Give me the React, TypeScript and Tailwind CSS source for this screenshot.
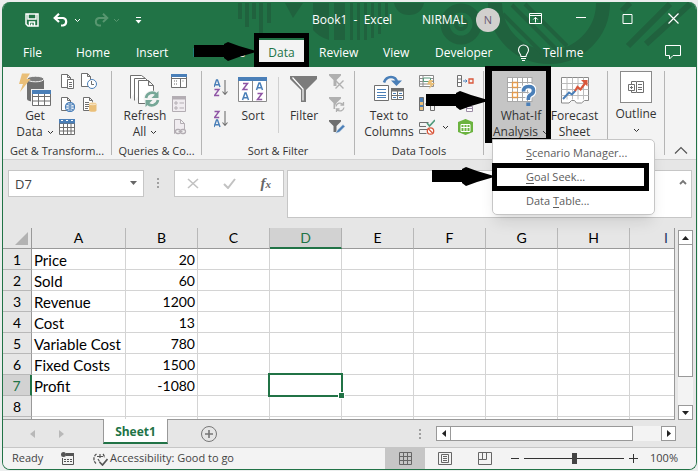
import type { ReactNode } from "react";

type SvgProps = { w: number; h: number; children: ReactNode; className?: string };

function Svg({ w, h, children, className = "" }: SvgProps) {
  return (
    <svg width={w} height={h} viewBox={`0 0 ${w} ${h}`} fill="none" aria-hidden="true" className={`block shrink-0 ${className}`}>
      {children}
    </svg>
  );
}

function Chevron({ className = "" }: { className?: string }) {
  return (
    <Svg w={7} h={5} className={className}>
      <path d="M1 1l2.500 2.500L6 1" stroke="currentColor" strokeWidth="1" />
    </Svg>
  );
}

function Arrow({ className }: { className: string }) {
  return (
    <svg width="62" height="19" viewBox="0 0 62 19" aria-hidden="true" className={`pointer-events-none absolute z-20 ${className}`}>
      <path d="M0 3H30V2L34 0L45 4L62 9V10L45 15L34 19L30 16V15H0Z" fill="#000" />
    </svg>
  );
}

/* ---------- title bar ---------- */

function HeaderPattern() {
  return (
    <svg width="466" height="65" viewBox="0 0 466 65" aria-hidden="true" className="pointer-events-none absolute top-0 right-0">
      <g fill="#20623e">
        <path d="M8 1h4v16H8zM15 1h4v24h-4zM22 1h4v16h-4zM29 1h4v30h-4zM37 1h4v20h-4z" />
        <path d="M55 1h18l-10 15z" />
        <path d="M83 1h16v37q-10-3-16-10zM104 1h11v37h-11z" />
        <path d="M120 1h3v37h-3zM127 1h3v37h-3zM134 1h3v37h-3zM141 1h3v35h-3zM148 1h3v31h-3zM155 1h3v20h-3z" />
        <path d="M164 1h30q-3 12-15 12T164 1z" />
      </g>
      <g stroke="#20623e" fill="none">
        <circle cx="231" cy="22" r="16" strokeWidth="9" />
        <circle cx="231" cy="22" r="5" strokeWidth="4" />
        <path d="M265 1a54 54 0 0 0 108 0" strokeWidth="14" />
        <path d="M273 12l40 40M282 3l45 45M295 2l42 42" strokeWidth="4" />
        <path d="M398 44l42-42M416 42l44-40M392 9l8-8" strokeWidth="6" />
      </g>
    </svg>
  );
}

function TitleBar() {
  const ctl = "flex h-9 w-[46px] items-center justify-center pb-1";
  return (
    <div className="relative flex h-9 items-center">
      <div className="flex flex-1 items-center pl-[22px]">
        <button aria-label="Save">
          <Svg w={14} h={14}>
            <path d="M1 1h12v12H3L1 11zM3 1v5h8V1M4.500 13V9h5v4" stroke="#fff" strokeWidth="1.500" />
            <path d="M6 10.500h1.500V13H6z" fill="#fff" />
          </Svg>
        </button>
        <button aria-label="Undo" className="ml-[14px]">
          <Svg w={16} h={14}>
            <path d="M1.500 5H10a3.800 3.800 0 0 1 0 7.500H8M6 .8L1.700 5l4.300 4" stroke="#fff" strokeWidth="2.200" />
          </Svg>
        </button>
        <button aria-label="Undo list" className="ml-[5px] text-white"><Chevron /></button>
        <button aria-label="Redo" className="ml-[12px]">
          <Svg w={16} h={14}>
            <path d="M14.500 5H6a3.800 3.800 0 0 0 0 7.500h2M10 .8L14.300 5 10 9" stroke="#57966f" strokeWidth="2" />
          </Svg>
        </button>
        <button aria-label="Redo list" className="ml-[4px] text-[#57966f]"><Chevron /></button>
        <button aria-label="Customize toolbar" className="ml-[15px]">
          <Svg w={7} h={7}>
            <path d="M1 .5h5" stroke="#fff" />
            <path d="M.5 3h6L3.500 6.500z" fill="#fff" />
          </Svg>
        </button>
      </div>
      <h1 className="w-[76px] text-center text-[12px] whitespace-pre text-white">Book1  -  Excel</h1>
      <span className="ml-[34px] w-[46px] text-[12px] text-white">NIRMAL</span>
      <button className="mr-3 ml-2 flex size-6 items-center justify-center rounded-full bg-[#d2d0ce] text-[11px] text-[#6b5b75]">N</button>
      <button aria-label="Ribbon display options" className={ctl}>
        <Svg w={13} h={11}>
          <path d="M.5.5h12v10H.500zM.5 2.500h12M6.500 9.500v-5M4.300 6.500l2.200-2.200 2.200 2.200" stroke="#fff" />
        </Svg>
      </button>
      <button aria-label="Minimize" className={ctl}>
        <Svg w={11} h={11}><path d="M0 4.500h10" stroke="#fff" /></Svg>
      </button>
      <button aria-label="Maximize" className={ctl}>
        <Svg w={11} h={11}><path d="M1 1.500h9v9H1z" stroke="#fff" /></Svg>
      </button>
      <button aria-label="Close" className={ctl}>
        <Svg w={11} h={11}><path d="M.5.5l10 10M10.500.5l-10 10" stroke="#fff" strokeWidth="1.200" /></Svg>
      </button>
    </div>
  );
}

function TabBar() {
  return (
    <nav className="relative flex h-[29px] items-center text-[12px] text-white">
      <button className="ml-5 w-[53px] text-left">File</button>
      <button className="w-[60px] text-left">Home</button>
      <button className="w-[57px] text-left">Insert</button>
      <button className="w-[66px] text-left">Formulas</button>
      <div className="relative flex h-[29px] w-[45px] items-center">
        <button className="h-[25px] w-full bg-[#f3f3f3] text-[#217346]">Data</button>
        <span className="pointer-events-none absolute -inset-x-[5px] -top-[5px] bottom-0 z-10 border-5 border-black" />
        <Arrow className="top-1 right-[48px]" />
      </div>
      <button className="ml-[15px] w-[64px] text-left">Review</button>
      <button className="w-[52px] text-left">View</button>
      <button className="w-[82px] text-left">Developer</button>
      <Svg w={13} h={17}>
        <path d="M4 12.500C4 10 1.500 9 1.500 6a5 5 0 0 1 10 0C11.500 9 9 10 9 12.500zM4 14.500h5M5 16.500h3" stroke="#fff" strokeWidth="1.100" />
      </Svg>
      <button className="ml-[13px] text-left">Tell me</button>
      <button aria-label="Comments" className="mr-[14px] ml-auto">
        <Svg w={17} h={15}><path d="M.5.500h15v10H8l-3.500 3.500v-3.500h-4z" stroke="#fff" /></Svg>
      </button>
    </nav>
  );
}

/* ---------- ribbon icons ---------- */

const G = "#6f6f6f";
const BLUE = "#4a7fb8";

function GetDataIcon() {
  return (
    <Svg w={34} h={36}>
      <path d="M9 7v20a8.500 3 0 0 0 17 0V7z" fill="#6f6f6f" />
      <ellipse cx="17.500" cy="7" rx="8.500" ry="2.800" fill="#7d7d7d" stroke="#f3f3f3" />
      <path d="M4 1.500h8L8.500 7h4L2 20l3-8H1z" fill="#eabf78" />
      <path d="M13 17h21v18H13z" fill="#f3f3f3" />
      <path d="M14.500 19.500h18v14h-18zM14.500 24.500h18M14.500 29h18M20.500 20v13M26.500 20v13" stroke={G} fill="#fff" />
      <path d="M14 18h19v4H14z" fill={BLUE} />
    </Svg>
  );
}

function PageBase({ color = G, fill = "#fff" }: { color?: string; fill?: string }) {
  return <path d="M2.500 1.500h6l3 3v10h-9zM8.500 1.500v3h3" stroke={color} fill={fill} />;
}

function TextFileIcon() {
  return (
    <Svg w={16} h={16}>
      <PageBase />
      <path d="M8.500 6.500h6v9h-6z" fill="#fff" stroke={G} />
      <path d="M10 9.500h3M10 11.500h3M10 13.500h3" stroke={G} />
    </Svg>
  );
}
function RecentIcon() {
  return (
    <Svg w={16} h={16}>
      <path d="M.5.500h6l3 3v10h-9zM6.500.5v3h3" stroke={G} fill="#fff" />
      <circle cx="11" cy="11" r="4.500" fill="#fff" stroke={BLUE} />
      <path d="M10.500 8v3.500H13" stroke={G} />
    </Svg>
  );
}
function WebFileIcon() {
  return (
    <Svg w={16} h={16}>
      <PageBase />
      <circle cx="11" cy="11" r="4.500" fill="#fff" stroke={BLUE} strokeWidth="1.300" />
      <path d="M6.500 11h9M11 6.500v9M8 8.500q3 1.500 6 0M8 13.500q3-1.500 6 0" stroke={BLUE} />
    </Svg>
  );
}
function DbFileIcon() {
  return (
    <Svg w={16} h={16}>
      <PageBase />
      <path d="M4 6.500h4M4 8.500h4M4 10.500h4M4 12.500h3" stroke={G} />
      <path d="M8 7.500v7a3.700 1.300 0 0 0 7.500 0v-7z" fill="#eabf78" />
      <ellipse cx="11.700" cy="7.500" rx="3.700" ry="1.300" fill="#f0cf97" stroke="#fff" strokeWidth=".5" />
    </Svg>
  );
}
function TableIcon() {
  return (
    <Svg w={16} h={16}>
      <path d="M.5.500h15v15H.500zM.5 4.500h15M.5 8.500h15M.5 12h15M4.500 4v11M8.500 4v11M12 4v11" stroke={G} fill="#fff" />
      <path d="M0 0h16v4.500H0z" fill={BLUE} />
      <path d="M2 1.500h2M7 1.500h2M12 1.500h2" stroke="#fff" />
    </Svg>
  );
}
function RefreshIcon() {
  return (
    <Svg w={32} h={36}>
      <path d="M5.500 28.500V6.500h11l4 4M1.500 26.500v-23h11l4 3" stroke={G} fill="#fff" />
      <path d="M9.500 31.500v-23h10l5 5v18zM19.500 8.500v5h5" stroke={G} fill="#fff" />
      <circle cx="23" cy="27" r="8.500" fill="#f3f3f3" />
      <path d="M17 26a6.200 6.200 0 0 1 10.500-3.500M29 28a6.200 6.200 0 0 1-10.500 3.500" stroke="#76a797" strokeWidth="2.600" />
      <path d="M29.500 19v7h-7zM16.500 35v-7h7z" fill="#76a797" />
    </Svg>
  );
}
function QueriesIcon() {
  return (
    <Svg w={16} h={16}>
      <path d="M.5 1.500h15v13H.500zM.5 5.500h15M9.500 5.500v9" stroke={G} fill="#fff" />
      <path d="M0 1h16v3H0z" fill={BLUE} />
      <path d="M3 8h3M3 11h3M11.500 8h2" stroke={G} strokeDasharray="1 1" />
    </Svg>
  );
}
function PropertiesIcon() {
  return (
    <Svg w={16} h={16}>
      <path d="M1.500.5h13v15h-13z" stroke="#b3adb3" fill="#f0ecf0" />
      <path d="M1 0h14v3.500H1z" fill="#b3adb3" />
      <path d="M4 6h2v2H4zM4 11h2v2H4z" stroke="#b3adb3" />
      <path d="M8.500 7H13M8.500 12H13" stroke="#b3adb3" />
    </Svg>
  );
}
function LinksIcon() {
  return (
    <Svg w={16} h={16}>
      <path d="M3.500.500h6l4 4v10h-10zM9.500.5v4h4" stroke="#b3adb3" fill="#f0ecf0" />
      <path d="M4 10h10v5H4z" fill="#f3f3f3" />
      <rect x="4.500" y="10.500" width="5" height="4" rx="2" stroke="#b3adb3" strokeWidth="1.300" />
      <rect x="9.500" y="10.500" width="5" height="4" rx="2" stroke="#b3adb3" strokeWidth="1.300" />
      <path d="M7.500 12.500h4" stroke="#b3adb3" />
    </Svg>
  );
}

const LETTER_A = "M0 7L2.500 0H3.500L6 7M1 4.800H5";
const LETTER_Z = "M.5.500H5L.5 6.500H5.200";

function SortSmallIcon({ up }: { up: boolean }) {
  return (
    <Svg w={14} h={18}>
      <path d={LETTER_A} transform={up ? "translate(0 1)" : "translate(0 10)"} stroke={BLUE} strokeWidth="1.400" />
      <path d={LETTER_Z} transform={up ? "translate(0 10)" : "translate(0 1)"} stroke="#8f55a5" strokeWidth="1.400" />
      <path d="M11 1v14.500M8.500 12.500l2.500 3 2.500-3" stroke={G} strokeWidth="1.100" />
    </Svg>
  );
}
function SortIcon() {
  return (
    <Svg w={30} h={36}>
      <path d="M.5 5.500h28v24H.500zM14.500 8v21" stroke="#8a8a8a" fill="#fff" />
      <path d="M0 5h29v4H0z" fill={BLUE} />
      <path d={LETTER_Z} transform="translate(4.500 11)" stroke="#8f55a5" strokeWidth="1.500" />
      <path d={LETTER_A} transform="translate(4.500 21)" stroke={BLUE} strokeWidth="1.500" />
      <path d={LETTER_A} transform="translate(18.500 11)" stroke={BLUE} strokeWidth="1.500" />
      <path d={LETTER_Z} transform="translate(19 21)" stroke="#8f55a5" strokeWidth="1.500" />
    </Svg>
  );
}
function FilterIcon() {
  return (
    <Svg w={28} h={36}>
      <path d="M0 4h27v3L16 18v12h-5V18L0 7z" fill="#7b7b7b" />
      <path d="M2.500 5.500L13 17v11.500" stroke="#fff" strokeWidth="1.200" />
    </Svg>
  );
}
function SmallFilter({ kind }: { kind: "clear" | "reapply" | "advanced" }) {
  const c = kind === "advanced" ? "#6f6f6f" : "#b0b0b0";
  return (
    <Svg w={16} h={16}>
      <path d="M0 1h12v1.500L7.500 7v6h-3V7L0 2.500z" fill={c} />
      {kind === "clear" && <path d="M6.500 7.500l8 8M14.500 7.500l-8 8" stroke="#b0b0b0" strokeWidth="1.400" />}
      {kind === "reapply" && (
        <>
          <circle cx="11" cy="11" r="5" fill="#f3f3f3" />
          <path d="M7 10.500a4 4 0 0 1 7-2M15 11.500a4 4 0 0 1-7 2M14.500 6v3h-3M7.500 16v-3h3" stroke="#b0b0b0" strokeWidth="1.300" />
        </>
      )}
      {kind === "advanced" && <path d="M6.500 14.500l2-3.500 5.500-5.500 2 2L10.500 13z" fill={BLUE} stroke="#f3f3f3" strokeWidth=".5" />}
    </Svg>
  );
}
function TextToColumnsIcon() {
  return (
    <Svg w={30} h={36}>
      <path d="M10 10.500Q12 5 17 5t6 5" stroke={BLUE} strokeWidth="2.600" />
      <path d="M17 8.500h11l-5.500 5.500z" fill={BLUE} />
      <path d="M.5 13.500h14v15H.500z" stroke={G} fill="#fff" />
      <path d="M3 17.500h9M3 20.500h9M3 23.500h9M3 25.500h9" stroke={BLUE} />
      <path d="M17.500 16.500h12v11h-12zM23.500 17v10M17.500 23.500h12" stroke={G} fill="#fff" />
      <path d="M17 16h13v3.500H17z" fill={G} />
      <path d="M19 21.500h3M25 21.500h3M19 25.500h3M25 25.500h3" stroke={BLUE} />
    </Svg>
  );
}
function FlashFillIcon() {
  return (
    <Svg w={16} h={16}>
      <path d="M.5 2.500h14v11H.500zM.5 5.500h14M.5 8.500h14M.5 11h14M4 2.500v11" stroke="#8a8a8a" fill="#fff" />
      <path d="M4.500 5h7v3.500h-7z" stroke="#5a9b7c" fill="#fff" />
      <path d="M10 7h4l-1.500 3H16l-6 6 1.500-4.500H8z" fill="#eabf78" />
    </Svg>
  );
}
function DuplicatesIcon() {
  return (
    <Svg w={16} h={16}>
      <path d="M.5 1.500h4v13h-4z" stroke={G} fill={BLUE} />
      <path d="M1 6h3v3H1zM1 11h3v3H1z" fill="#eabf78" />
      <path d="M6 8h3M11.500 4.500h4v10h-4zM11.500 9.500h4" stroke={G} />
    </Svg>
  );
}
function ValidationIcon() {
  return (
    <Svg w={16} h={16}>
      <path d="M.5 3.500h9M.5 3.500v4H7M.5 10.500h8M.5 10.500v4h7" stroke={G} />
      <path d="M8 4l2.500 3L16 1" stroke="#4f9a7b" strokeWidth="1.600" />
      <circle cx="11.500" cy="12" r="3.200" stroke="#d9573b" strokeWidth="1.300" fill="#fff" />
      <path d="M9.500 10l4 4" stroke="#d9573b" strokeWidth="1.200" />
    </Svg>
  );
}
function ConsolidateIcon() {
  return (
    <Svg w={17} h={16}>
      <path d="M.5 2.500h4v11h-4zM.5 6h4M.5 9.500h4" stroke={G} fill="#fff" />
      <path d="M6 8h4M8.500 6.500L10 8 8.500 9.500" stroke={BLUE} />
      <path d="M12 6h4v4h-4z" stroke="#d9573b" strokeWidth="1.300" />
    </Svg>
  );
}
function RelationsIcon() {
  return (
    <Svg w={17} h={16}>
      <path d="M.5 1.500h7v5h-7z" stroke={G} fill="#fff" />
      <path d="M9.500 10.500h6v5h-6zM9.500 12.500h6" stroke="#9b8ba5" fill="#fff" />
    </Svg>
  );
}
function DataModelIcon() {
  return (
    <Svg w={17} h={16}>
      <path d="M8.500 0L16 3v10l-7.500 3L1 13V3z" fill="#6bb33f" />
      <path d="M4 5.500h9v7H4zM4 8.500h9M7 5.500v7M10 5.500v7" stroke="#fff" />
    </Svg>
  );
}
function WhatIfIcon() {
  return (
    <Svg w={30} h={36}>
      <path d="M1 5h25v25H1z" fill="#fff" />
      <path d="M1.500 5v25M6.500 5v25M11.500 5v25M16.500 5v25M21.500 5v25M26 5v25M1 5.500h25M1 10.500h25M1 15.500h25M1 20.500h25M1 25.500h25M1 29.500h25" stroke="#a9a9a9" />
      <path d="M6.500 10.500h5v5h-5zM6.500 20.500h5v5h-5z" stroke="#e39a4d" strokeWidth="1.300" fill="#fff" />
      <path d="M17.500 19q0-4.500 5-4.500t5 4q0 3-2.700 4.200T22.300 27" stroke="#fff" strokeWidth="6" />
      <path d="M17.500 19.500q0-5 5-5t5 4q0 3-2.700 4.200T22.300 28" stroke={BLUE} strokeWidth="3.600" />
      <path d="M20.300 30.500h4v3.500h-4z" fill={BLUE} />
    </Svg>
  );
}
function ForecastIcon() {
  return (
    <Svg w={28} h={36}>
      <path d="M.5 5.500h27v23h-4l-3 2.500h-5l-2-2.500h-3L8 31H.500z" fill="#fff" stroke="#8a8a8a" />
      <path d="M6 5.500v22M11.500 5.500v22M17 5.500v22M22.500 5.500v22M.5 11.500h27M.5 17.500h27M.5 23.500h27" stroke="#bcbcbc" />
      <path d="M2 27l6-6.500 3 2 3.500-4" stroke={BLUE} strokeWidth="2" />
      <path d="M14 19l2.500-4 3 2.500L25 10" stroke="#d9573b" strokeWidth="2.200" />
      <path d="M20 8h6.500v6.500z" fill="#d9573b" />
    </Svg>
  );
}
function OutlineIcon() {
  return (
    <span className="flex size-8 items-center justify-center border border-[#8a8a8a] bg-white">
      <Svg w={16} h={14}>
        <path d="M.5 4.500h6v6h-6zM2 7.500h3M3.500 6v3M3.500 4V1.500H8M3.500 11v1.500H8" stroke={G} />
        <path d="M8.500 1.500h7v11h-7zM10 4.500h4M10 7.500h4M10 9.500h4" stroke={G} />
      </Svg>
    </span>
  );
}

/* ---------- ribbon ---------- */

function BigButton({ icon, lines, chevron = false, className = "" }: { icon: ReactNode; lines: string[]; chevron?: boolean; className?: string }) {
  return (
    <button className={`flex h-[69px] flex-col items-center pt-px leading-4 ${className}`}>
      {icon}
      {lines.map((line, i) => (
        <span key={line} className="flex items-center whitespace-nowrap">
          {line}
          {chevron && i === lines.length - 1 && <Chevron className="ml-1" />}
        </span>
      ))}
    </button>
  );
}

function IconStack({ items, className = "" }: { items: [string, ReactNode][]; className?: string }) {
  return (
    <div className={`flex flex-col gap-[7px] pt-0.5 ${className}`}>
      {items.map(([name, icon]) => (
        <button key={name} aria-label={name}>{icon}</button>
      ))}
    </div>
  );
}

function Group({ label, className, children }: { label?: string; className: string; children: ReactNode }) {
  return (
    <section className={`flex shrink-0 flex-col pt-1 ${className}`}>
      <div className="flex h-[72px] items-start">{children}</div>
      {label && <h2 className="text-center text-[11px] leading-4 whitespace-nowrap">{label}</h2>}
    </section>
  );
}

const Sep = () => <span className="my-1 w-px shrink-0 bg-[#b5b5b5]" />;

function MenuItem({ before = "", hot, after }: { before?: string; hot: string; after: string }) {
  return (
    <button role="menuitem" className="block h-6 w-full pl-[33px] text-left text-[11px] text-[#5c5c5c]">
      {before}<span className="underline underline-offset-2">{hot}</span>{after}
    </button>
  );
}

function Ribbon() {
  return (
    <div className="flex h-[93px] border-b border-[#d2d2d2] bg-[#f3f3f3] text-[12px] text-[#333]">
      <Group label="Get &amp; Transform..." className="w-[108px]">
        <BigButton className="ml-2 w-[48px]" icon={<GetDataIcon />} lines={["Get", "Data"]} chevron />
        <IconStack items={[["From text", <TextFileIcon />], ["From web", <WebFileIcon />], ["From table", <TableIcon />]]} />
        <IconStack className="ml-[6px]" items={[["Recent sources", <RecentIcon />], ["Existing connections", <DbFileIcon />]]} />
      </Group>
      <Sep />
      <Group label="Queries &amp; Co..." className="w-[89px]">
        <BigButton className="ml-2 w-[50px]" icon={<RefreshIcon />} lines={["Refresh", "All"]} chevron />
        <IconStack className="ml-px" items={[["Queries", <QueriesIcon />], ["Properties", <PropertiesIcon />], ["Edit links", <LinksIcon />]]} />
      </Group>
      <Sep />
      <Group label="Sort &amp; Filter" className="w-[152px]">
        <div className="ml-3 flex flex-col gap-[13px] pt-2">
          <button aria-label="Sort ascending"><SortSmallIcon up /></button>
          <button aria-label="Sort descending"><SortSmallIcon up={false} /></button>
        </div>
        <BigButton className="ml-[7px] w-[36px]" icon={<SortIcon />} lines={["Sort"]} />
        <span className="mt-1.5 ml-[7px] h-14 w-px bg-[#d0d0d0]" />
        <BigButton className="ml-[7px] w-[36px]" icon={<FilterIcon />} lines={["Filter"]} />
        <IconStack className="ml-[7px]" items={[["Clear", <SmallFilter kind="clear" />], ["Reapply", <SmallFilter kind="reapply" />], ["Advanced", <SmallFilter kind="advanced" />]]} />
      </Group>
      <Sep />
      <Group label="Data Tools" className="w-[128px]">
        <BigButton className="ml-2 w-[52px]" icon={<TextToColumnsIcon />} lines={["Text to", "Columns"]} />
        <IconStack className="ml-1" items={[["Flash fill", <FlashFillIcon />], ["Remove duplicates", <DuplicatesIcon />], ["Data validation", <ValidationIcon />]]} />
        <button aria-label="Data validation options" className="mt-[54px] ml-[7px]"><Chevron /></button>
        <IconStack className="ml-2" items={[["Consolidate", <ConsolidateIcon />], ["Relationships", <RelationsIcon />], ["Data model", <DataModelIcon />]]} />
      </Group>
      <Sep />
      <Group className="w-[123px]">
        <div className="relative ml-2">
          <BigButton className="w-[54px] bg-[#c5c5c5] pl-1" icon={<WhatIfIcon />} lines={["What-If", "Analysis"]} chevron />
          <span className="pointer-events-none absolute -top-[5px] -right-[5px] -bottom-[3px] -left-[7px] border-5 border-l-7 border-black" />
          <Arrow className="top-5 right-[58px]" />
          <div role="menu" className="absolute top-[68px] left-0 z-10 w-[163px] rounded-b-[5px] rounded-tr-[5px] border border-[#c6c6c6] bg-white py-px shadow-lg">
            <MenuItem hot="S" after="cenario Manager..." />
            <div className="relative">
              <MenuItem hot="G" after="oal Seek..." />
              <span className="pointer-events-none absolute -inset-y-0.5 right-[5px] -left-px border-5 border-black" />
              <Arrow className="top-0.5 -left-[61px]" />
            </div>
            <MenuItem before="Data " hot="T" after="able..." />
          </div>
        </div>
        <BigButton className="w-[57px]" icon={<ForecastIcon />} lines={["Forecast", "Sheet"]} />
      </Group>
      <Sep />
      <Group className="w-[56px]">
        <button className="flex w-full flex-col items-center leading-4">
          <OutlineIcon />
          <span className="mt-[3px]">Outline</span>
          <Chevron className="mt-1.5" />
        </button>
      </Group>
      <Sep />
      <button aria-label="Collapse ribbon" className="ml-auto self-end px-2 pb-1">
        <Svg w={14} h={9}><path d="M1 7.500l6-6 6 6" stroke="#555" strokeWidth="1.200" /></Svg>
      </button>
    </div>
  );
}

/* ---------- formula bar ---------- */

function FormulaBar() {
  return (
    <div className="flex items-start bg-[#e6e6e6] pt-2.5 pr-1 pb-2.5 pl-[5px]">
      <div className="relative h-[27px] w-[136px] shrink-0 border border-[#c6c6c6] bg-white">
        <input aria-label="Name box" defaultValue="D7" className="h-full w-full bg-transparent pl-1.5 text-[13px] text-[#444] outline-none" />
        <button aria-label="Name list" className="absolute top-[10px] right-1.5">
          <Svg w={7} h={5}><path d="M0 0h7L3.500 4z" fill="#666" /></Svg>
        </button>
      </div>
      <Svg w={3} h={12} className="mt-2 ml-[13px]">
        <path d="M0 0h2v2H0zM0 4h2v2H0zM0 8h2v2H0z" fill="#a0a0a0" />
      </Svg>
      <div className="ml-[14px] flex h-[27px] w-[110px] shrink-0 items-center justify-between border border-[#c6c6c6] bg-white px-3">
        <button aria-label="Cancel">
          <Svg w={12} h={11}><path d="M1 1l10 9M11 1L1 10" stroke="#c2c2c2" strokeWidth="1.600" /></Svg>
        </button>
        <button aria-label="Enter">
          <Svg w={13} h={11}><path d="M1 6l4 4 7-9" stroke="#c2c2c2" strokeWidth="2" /></Svg>
        </button>
        <button className="font-['Liberation_Serif',serif] text-[15px] leading-5 font-bold text-[#666] italic">f<span className="text-[11px]">x</span></button>
      </div>
      <div className="relative ml-[3px] h-12 flex-1 border border-[#c6c6c6] bg-white">
        <textarea aria-label="Formula" className="block h-full w-full resize-none bg-transparent outline-none" />
        <button aria-label="Expand formula bar" className="absolute top-2 right-1">
          <Svg w={8} h={6}><path d="M1 5l3-3 3 3" stroke="#777" strokeWidth="1.800" /></Svg>
        </button>
      </div>
    </div>
  );
}

/* ---------- sheet ---------- */

const COLS = ["A", "B", "C", "D", "E", "F", "G", "H", "I"];
const ROWS: [string, string][] = [
  ["Price", "20"],
  ["Sold", "60"],
  ["Revenue", "1200"],
  ["Cost", "13"],
  ["Variable Cost", "780"],
  ["Fixed Costs", "1500"],
  ["Profit", "-1080"],
  ["", ""],
];

function Sheet() {
  return (
    <div className="h-48 min-w-0 flex-1 overflow-hidden border-r border-b border-[#999] bg-white">
      <table className="w-full table-fixed border-separate border-spacing-0 font-[Lato,sans-serif] text-[14px] text-black">
        <colgroup>
          <col className="w-[29px]" />
          <col className="w-[94px]" />
          {COLS.slice(1, 8).map((c) => <col key={c} className="w-[72px]" />)}
          <col />
        </colgroup>
        <thead>
          <tr>
            <th aria-label="Select all" className="h-[21px] border-r border-b border-[#999] bg-[#e6e6e6] p-0">
              <span className="flex justify-end pr-[3px]">
                <Svg w={13} h={13}><path d="M13 0v13H0z" fill="#b2b2b2" /></Svg>
              </span>
            </th>
            {COLS.map((c) => (
              <th
                key={c}
                className={
                  c === "D"
                    ? "h-[21px] border-r border-b-2 border-r-[#b0b0b0] border-b-[#217346] bg-[#d2d2d2] p-0 pt-px leading-[18px] font-normal text-[#217346]"
                    : `h-[21px] border-b border-[#999] bg-[#e6e6e6] p-0 leading-5 font-normal ${c === "I" ? "pl-[34px] text-left text-[#1f3864]" : "border-r border-r-[#b8b8b8]"}`
                }
              >
                {c}
              </th>
            ))}
          </tr>
        </thead>
        <tbody>
          {ROWS.map(([a, b], r) => (
            <tr key={r}>
              <th
                className={
                  r === 6
                    ? "h-[21px] border-r-2 border-b border-r-[#217346] border-b-[#b8b8b8] bg-[#d2d2d2] p-0 pt-0.5 leading-[18px] font-normal text-[#217346]"
                    : "h-[21px] border-r border-b border-r-[#999] border-b-[#b8b8b8] bg-[#e6e6e6] p-0 pt-0.5 leading-[18px] font-normal"
                }
              >
                {r + 1}
              </th>
              {COLS.map((c) => (
                <td
                  key={c}
                  className={`relative h-[21px] border-b border-[#d4d4d4] p-0 pt-0.5 leading-[18px] whitespace-nowrap ${c === "I" ? "" : "border-r"} ${c === "A" ? "pl-0.5 text-[15px]" : "pr-0.5 text-right"}`}
                >
                  {c === "A" ? a : c === "B" ? b : null}
                  {c === "D" && r === 6 && (
                    <span className="absolute -inset-0.5 z-10 border-2 border-[#217346]">
                      <span className="absolute -right-[4px] -bottom-[4px] size-[7px] border border-white bg-[#217346]" />
                    </span>
                  )}
                </td>
              ))}
            </tr>
          ))}
          <tr>
            <th className="h-[21px] border-r border-[#999] bg-[#e6e6e6] p-0" />
            {COLS.map((c) => <td key={c} className={`h-[21px] border-[#d4d4d4] p-0 ${c === "I" ? "" : "border-r"}`} />)}
          </tr>
        </tbody>
      </table>
    </div>
  );
}

const scrollBtn = "flex size-[15px] shrink-0 items-center justify-center border border-[#999] bg-white";

function VerticalScroll() {
  return (
    <div className="flex w-[21px] flex-col items-center bg-[#e6e6e6] pt-[2px] pr-px">
      <button aria-label="Scroll up" className={scrollBtn}>
        <Svg w={7} h={4}><path d="M0 4h7L3.500 0z" fill="#222" /></Svg>
      </button>
      <div className="flex w-[15px] flex-1 flex-col bg-[#f3f3f3]">
        <div className="-mt-px h-[133px] border border-[#999] bg-white" />
      </div>
      <button aria-label="Scroll down" className={scrollBtn}>
        <Svg w={7} h={4}><path d="M0 0h7L3.500 4z" fill="#222" /></Svg>
      </button>
    </div>
  );
}

function SheetTabs() {
  return (
    <div className="flex h-[27px] bg-[#e6e6e6]">
      <button aria-label="Previous sheet" className="ml-[27px]">
        <Svg w={5} h={8}><path d="M5 0v8L0 4z" fill="#b8b8b8" /></Svg>
      </button>
      <button aria-label="Next sheet" className="ml-6">
        <Svg w={5} h={8}><path d="M0 0v8l5-4z" fill="#b8b8b8" /></Svg>
      </button>
      <button className="-mt-px ml-[39px] h-[25px] w-[65px] border-x border-b-2 border-x-[#999] border-b-[#217346] bg-white pt-0.5 text-[12px] font-bold text-[#217346]">
        Sheet1
      </button>
      <button aria-label="New sheet" className="ml-8">
        <Svg w={18} h={18}>
          <circle cx="9" cy="9" r="7.500" stroke="#777" />
          <path d="M5 9h8M9 5v8" stroke="#777" strokeWidth="1.600" />
        </Svg>
      </button>
      <div className="mr-5 ml-auto flex items-center">
        <Svg w={3} h={12} className="mr-[14px]">
          <path d="M0 1h2v2H0zM0 5h2v2H0zM0 9h2v2H0z" fill="#a0a0a0" />
        </Svg>
        <button aria-label="Scroll left" className={scrollBtn}>
          <Svg w={4} h={7}><path d="M4 0v7L0 3.500z" fill="#222" /></Svg>
        </button>
        <div className="h-[15px] w-[210px] bg-[#f3f3f3]">
          <div className="-ml-px h-full w-[183px] border border-[#999] bg-white" />
        </div>
        <button aria-label="Scroll right" className={scrollBtn}>
          <Svg w={4} h={7}><path d="M0 0v7l4-3.500z" fill="#222" /></Svg>
        </button>
      </div>
    </div>
  );
}

function StatusBar() {
  const view = "flex h-full w-10 items-center justify-center";
  return (
    <footer className="flex h-[22px] items-center border-t border-[#c6c6c6] bg-[#f3f3f3] text-[11px] text-[#444]">
      <span className="ml-[9px] w-[49px]">Ready</span>
      <button aria-label="Macro recording">
        <Svg w={14} h={13}>
          <path d="M5 3.500h7.500v9h-11V6" stroke="#555" />
          <path d="M5 1h8v3H5z" fill="#555" />
          <circle cx="2.500" cy="2.500" r="2.500" fill="#555" />
          <path d="M3 7.500h8M3 9.500h8" stroke="#555" strokeDasharray="2 1" />
        </Svg>
      </button>
      <button className="ml-[17px] flex items-center gap-0.5 whitespace-nowrap">
        <Svg w={16} h={14}>
          <path d="M4.500 2A6 6 0 0 0 4 11.500M11 2a6 6 0 0 1 1.500 4" stroke="#555" strokeWidth="1.300" strokeDasharray="3 1" />
          <path d="M5 4.500h6M8 2v4M6 7l1.500 2.500" stroke="#555" strokeWidth="1.200" />
          <path d="M7.500 10l3 3 5-6" stroke="#555" strokeWidth="1.700" />
        </Svg>
        Accessibility: Good to go
      </button>
      <button aria-label="Normal view" className={`${view} ml-auto bg-[#c6c6c6]`}>
        <Svg w={13} h={13}><path d="M.5.500h12v12H.500zM.5 4.500h12M.5 8.500h12M4.500.5v12M8.500.5v12" stroke="#666" /></Svg>
      </button>
      <button aria-label="Page layout view" className={view}>
        <Svg w={14} h={13}><path d="M.5.500h13v12H.500zM3.500 2.500h7v8h-7zM5 4.500h4M5 6.500h4M5 8.500h4" stroke="#666" /></Svg>
      </button>
      <button aria-label="Page break view" className={view}>
        <Svg w={14} h={13}><path d="M.5.500h13v12H.500zM.5 7.500h8V.500M4.500.5v7" stroke="#666" /></Svg>
      </button>
      <button aria-label="Zoom out" className="ml-[6px]">
        <Svg w={8} h={9}><path d="M0 4.500h8" stroke="#333" /></Svg>
      </button>
      <input
        type="range"
        aria-label="Zoom"
        defaultValue={50}
        className="mx-[5px] h-3 w-[100px] appearance-none bg-transparent [&::-webkit-slider-runnable-track]:h-px [&::-webkit-slider-runnable-track]:bg-[#333] [&::-webkit-slider-thumb]:-mt-[5px] [&::-webkit-slider-thumb]:h-[11px] [&::-webkit-slider-thumb]:w-[5px] [&::-webkit-slider-thumb]:appearance-none [&::-webkit-slider-thumb]:bg-[#444]"
      />
      <button aria-label="Zoom in">
        <Svg w={9} h={9}><path d="M0 4.500h9M4.500 0v9" stroke="#333" /></Svg>
      </button>
      <button className="mr-[18px] ml-[10px] w-[30px] text-right">100%</button>
    </footer>
  );
}

export default function App() {
  return (
    <div className="bg-[#eceeee] pt-[2px] pr-px pb-px pl-[2px] font-['Open_Sans',sans-serif]">
      <main className="overflow-hidden rounded-lg border border-t-0 border-[#217346] bg-[#e6e6e6]">
        <header className="relative bg-[#217346]">
          <HeaderPattern />
          <TitleBar />
          <TabBar />
        </header>
        <Ribbon />
        <FormulaBar />
        <div className="flex">
          <Sheet />
          <VerticalScroll />
        </div>
        <SheetTabs />
        <StatusBar />
      </main>
    </div>
  );
}
